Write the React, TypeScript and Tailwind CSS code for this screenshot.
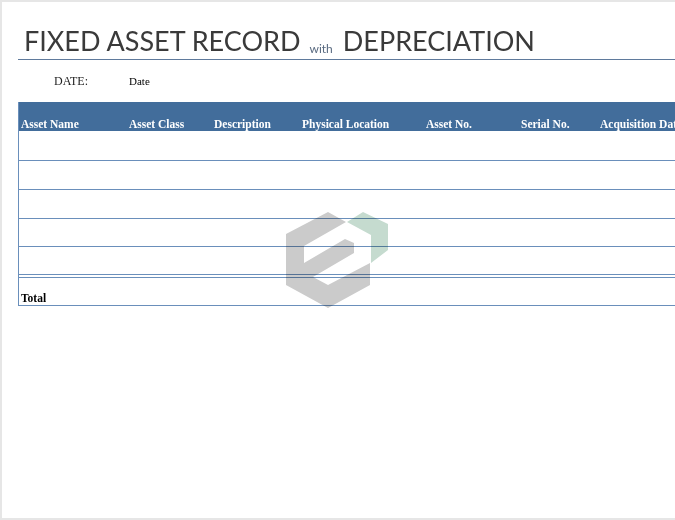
const columns = [
  { label: "Asset Name", width: "w-[108px]" },
  { label: "Asset Class", width: "w-[85px]" },
  { label: "Description", width: "w-[88px]" },
  { label: "Physical Location", width: "w-[124px]" },
  { label: "Asset No.", width: "w-[95px]" },
  { label: "Serial No.", width: "w-[79px]" },
  { label: "Acquisition Date", width: "w-[100px]" },
];

const Watermark = () => (
  <svg
    className="absolute left-[268px] top-[198px] mix-blend-multiply"
    width="130"
    height="115"
    viewBox="0 0 130 115"
  >
    <path
      d="M58 12 L16 34 L16 85 L58 108 L100 85 L100 63 L58 85 L43 77 L84 53 L84 43 L75 39 L34 63 L34 46 L76 22 Z"
      fill="#cbcbcb"
    />
    <path d="M77 22 L93 12 L118 24 L118 50 L101 63 L101 35 Z" fill="#c5dbcf" />
  </svg>
);

export default function App() {
  return (
    <div className="relative h-[520px] w-[675px] overflow-hidden border-t-2 border-b-2 border-l-2 border-[#e6e6e6] bg-white font-['Liberation_Serif',serif]">
      <div className="ml-4 mt-[20px] flex h-[38px] items-end whitespace-nowrap border-b border-[#5f7a9c] pl-[6px] font-['Lato',sans-serif] text-[#3a3a3a]">
        <span className="text-[27px] leading-[36px]">FIXED ASSET RECORD</span>
        <span className="ml-[9px] mb-[2px] text-xs leading-4 text-[#596a80]">with</span>
        <span className="ml-[10px] text-[27px] leading-[36px]">DEPRECIATION</span>
      </div>

      <div className="ml-[52px] mt-[13px] flex h-4 items-center text-xs text-black">
        <span className="w-[75px] text-[#222]">DATE:</span>
        <span className="text-[11px]">Date</span>
      </div>

      <div className="ml-4 mt-[13px] border-l border-[#6a8fbb]">
        <div className="flex h-[29px] items-end bg-[#426d9b] pl-[2px] text-[11.5px] leading-[14px] font-bold text-white">
          {columns.map((col) => (
            <span key={col.label} className={`${col.width} shrink-0 whitespace-nowrap`}>
              {col.label}
            </span>
          ))}
        </div>
        <div className="h-[30px] border-b border-[#6a8fbb]" />
        <div className="h-[29px] border-b border-[#6a8fbb]" />
        <div className="h-[29px] border-b border-[#6a8fbb]" />
        <div className="h-[28px] border-b border-[#6a8fbb]" />
        <div className="h-[28px] border-b border-[#6a8fbb]" />
        <div className="h-[3px] border-b border-[#6a8fbb]" />
        <div className="flex h-[28px] items-end border-b border-[#6a8fbb] pl-[2px] text-[11.5px] leading-[14px] font-bold text-black">
          Total
        </div>
      </div>

      <Watermark />
    </div>
  );
}
